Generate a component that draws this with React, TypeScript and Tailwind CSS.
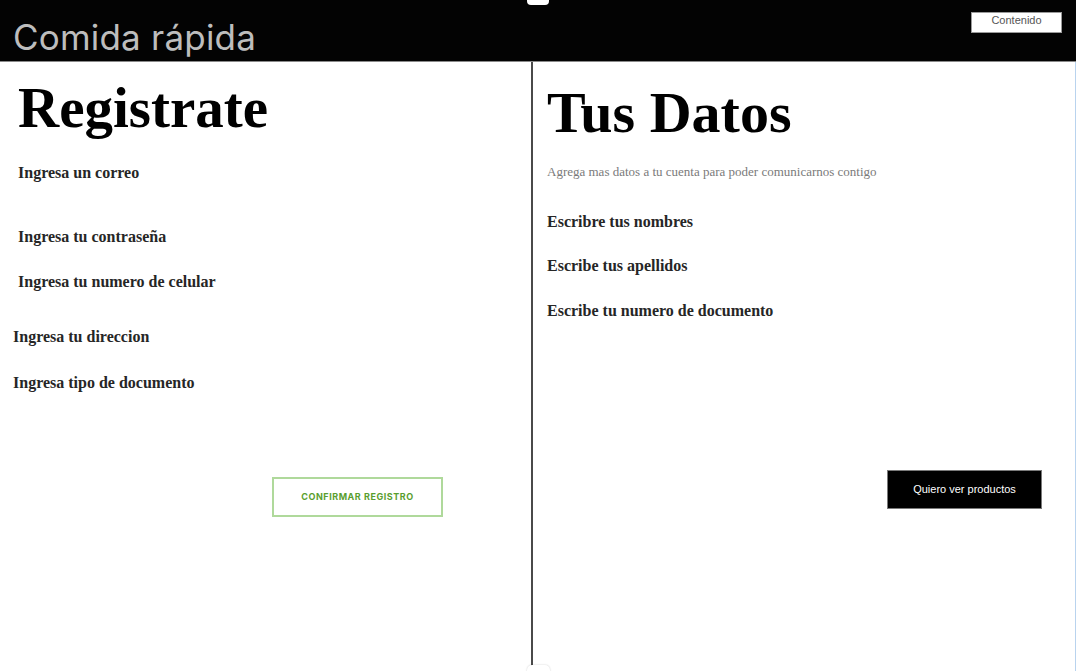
import React from 'react';

const serif = "font-['Liberation_Serif','Times_New_Roman',serif]";

function Label({ text, className = '' }: { text: string; className?: string }) {
  return (
    <p className={`${serif} text-[16px] leading-5 font-bold text-[#262626] ${className}`}>{text}</p>
  );
}

export default function App() {
  return (
    <div className="relative w-full h-[671px] overflow-hidden bg-white flex flex-col">
      {/* header */}
      <header className="h-[62px] shrink-0 bg-[#030303] border-b border-[#8a8a8a] flex items-start justify-between">
        <h1 className="ml-[13px] mt-[20px] font-['Inter',sans-serif] text-[35px] leading-none tracking-[0.2px] text-[#bdbdbd]">
          Comida rápida
        </h1>
        <button className="mt-[12px] mr-[14px] w-[91px] h-[21px] bg-white border border-[#9a9a9a] font-['Liberation_Sans',Arial,sans-serif] text-[11px] leading-none text-[#555] pb-[4px]">
          Contenido
        </button>
      </header>

      <div className="flex flex-1 min-h-0">
        {/* left: registro */}
        <section className="w-[533px] shrink-0 border-r-2 border-[#4a4a4a] flex flex-col">
          <h2 className={`${serif} ml-[18px] mt-[17px] text-[57px] leading-none font-bold text-black`}>
            Registrate
          </h2>
          <Label text="Ingresa un correo" className="ml-[18px] mt-[27px]" />
          <Label text="Ingresa tu contraseña" className="ml-[18px] mt-[44px]" />
          <Label text="Ingresa tu numero de celular" className="ml-[18px] mt-[25px]" />
          <Label text="Ingresa tu direccion" className="ml-[13px] mt-[35px]" />
          <Label text="Ingresa tipo de documento" className="ml-[13px] mt-[26px]" />
          <button className="ml-[272px] mt-[84px] w-[171px] h-[40px] border-2 border-[#afd99b] bg-white font-['Inter',sans-serif] text-[9px] font-bold tracking-[0.06em] text-[#5a9e2f]">
            CONFIRMAR REGISTRO
          </button>
        </section>

        {/* right: datos */}
        <section className="flex-1 border-r border-[#b9d3ee] flex flex-col">
          <h2 className={`${serif} ml-[14px] mt-[22px] text-[58px] leading-none font-bold text-black`}>
            Tus Datos
          </h2>
          <p className={`${serif} ml-[14px] mt-[20px] text-[13px] leading-5 text-[#7a7a7a]`}>
            Agrega mas datos a tu cuenta para poder comunicarnos contigo
          </p>
          <Label text="Escribre tus nombres" className="ml-[14px] mt-[30px]" />
          <Label text="Escribe tus apellidos" className="ml-[14px] mt-[24px]" />
          <Label text="Escribe tu numero de documento" className="ml-[14px] mt-[25px]" />
          <div className="flex justify-end mr-[33px] mt-[149px]">
            <button className="w-[155px] h-[39px] bg-black border border-[#7a7a7a] font-['Liberation_Sans',Arial,sans-serif] text-[11px] text-white">
              Quiero ver productos
            </button>
          </div>
        </section>
      </div>

      {/* resize handles */}
      <div className="absolute left-[527px] top-0 w-[22px] h-[5px] bg-white rounded-b-[4px]" />
      <div className="absolute left-[527px] top-[665px] w-[23px] h-[8px] bg-white rounded-t-[5px] shadow-[0_0_2px_rgba(0,0,0,0.2)]" />
    </div>
  );
}
